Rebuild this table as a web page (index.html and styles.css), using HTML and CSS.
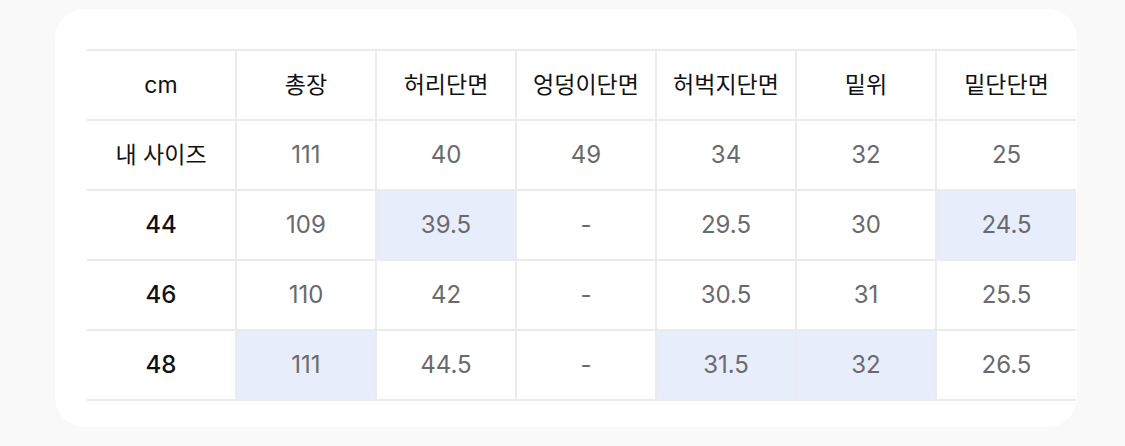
FILE: index.html
```html
<!DOCTYPE html>
<html lang="ko">
<head>
<meta charset="utf-8">
<link rel="stylesheet" href="styles.css">
</head>
<body>
<div class="card">
  <table class="size-table">
    <colgroup>
      <col class="c-first">
      <col class="c"><col class="c"><col class="c"><col class="c"><col class="c"><col class="c">
    </colgroup>
    <thead>
      <tr>
        <th>cm</th><th>총장</th><th>허리단면</th><th>엉덩이단면</th><th>허벅지단면</th><th>밑위</th><th>밑단단면</th>
      </tr>
    </thead>
    <tbody>
      <tr>
        <th class="label">내 사이즈</th><td>111</td><td>40</td><td>49</td><td>34</td><td>32</td><td>25</td>
      </tr>
      <tr>
        <th class="size">44</th><td>109</td><td class="hl">39.5</td><td>-</td><td>29.5</td><td>30</td><td class="hl">24.5</td>
      </tr>
      <tr>
        <th class="size">46</th><td>110</td><td>42</td><td>-</td><td>30.5</td><td>31</td><td>25.5</td>
      </tr>
      <tr>
        <th class="size">48</th><td class="hl">111</td><td>44.5</td><td>-</td><td class="hl">31.5</td><td class="hl">32</td><td>26.5</td>
      </tr>
    </tbody>
  </table>
</div>
</body>
</html>
```
FILE: styles.css
```css
html, body {
  margin: 0;
  padding: 0;
  background: #f9f9fa;
}
body {
  font-family: Inter, "Noto Sans CJK KR", sans-serif;
  width: 1125px;
  height: 446px;
  overflow: hidden;
}
.card {
  margin: 9px 0 0 55px;
  width: 1022px;
  height: 418px;
  box-sizing: border-box;
  padding: 40px 0 0 32px;
  background: #ffffff;
  border-radius: 30px;
}
.size-table {
  border-collapse: collapse;
  table-layout: fixed;
  width: 989px;
}
.c-first { width: 149px; }
.c { width: 140px; }
.size-table th,
.size-table td {
  height: 68px;
  padding: 0;
  text-align: center;
  vertical-align: middle;
  border: 2px solid #ebebee;
  font-size: 23px;
  line-height: 1;
}
.size-table tr > :first-child { border-left: none; }
.size-table tr > :last-child { border-right: none; }
.size-table thead th {
  font-weight: 400;
  color: #111111;
}
.size-table th.label {
  font-weight: 400;
  color: #111111;
}
.size-table th.size {
  font-weight: 500;
  font-size: 24px;
  color: #111111;
}
.size-table td {
  font-weight: 400;
  font-size: 24px;
  color: #6a6a6e;
}
.size-table td.hl {
  background: #e8edfb;
}
```
